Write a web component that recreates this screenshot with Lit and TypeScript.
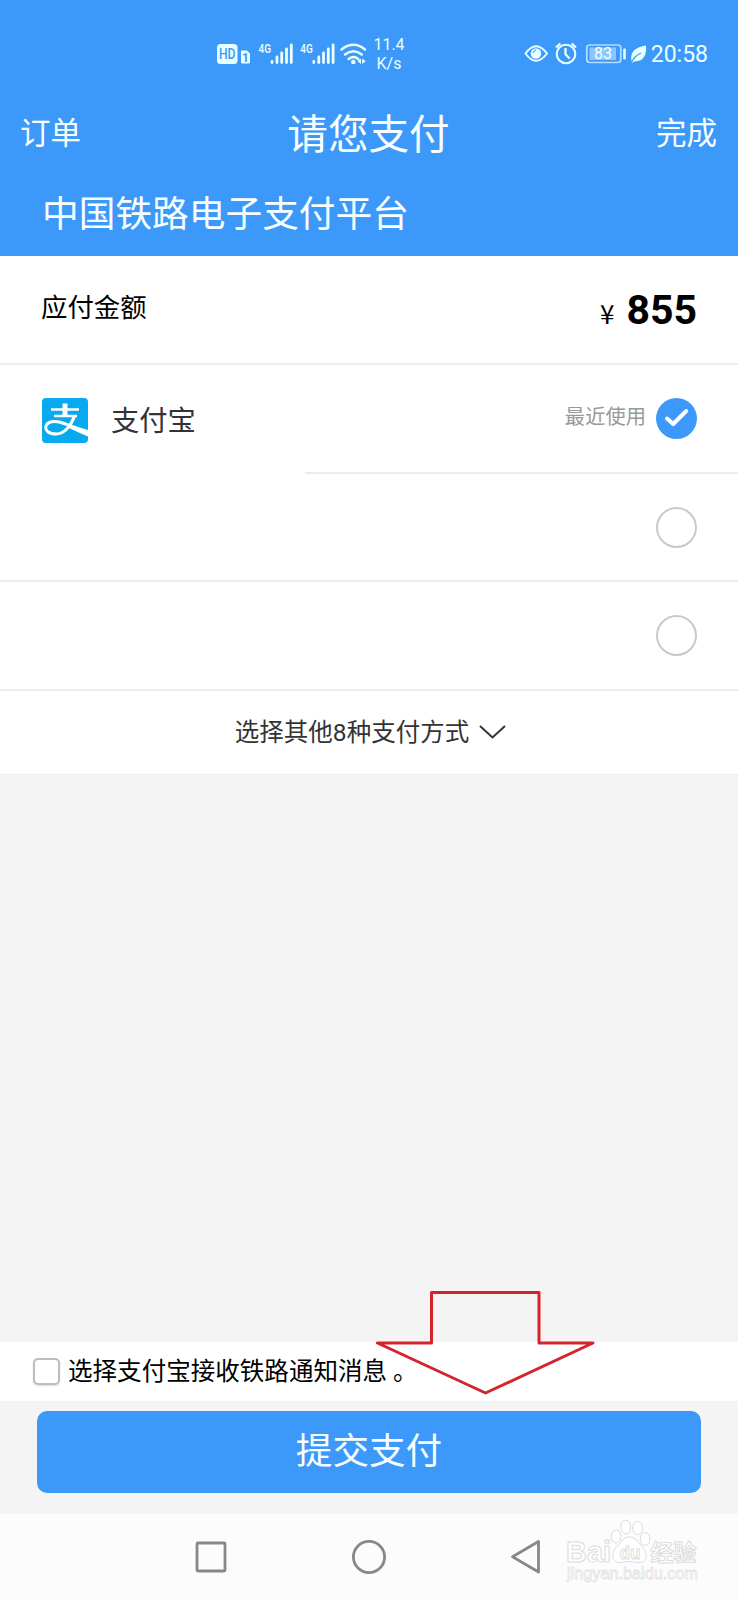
import { LitElement, html, css, svg } from 'lit';
import { customElement, property } from 'lit/decorators.js';

@customElement('status-bar')
class StatusBar extends LitElement {
  static styles = css`
    :host { display: flex; height: 107px; align-items: flex-start; justify-content: space-between; color: #eaffff;
      box-sizing: border-box; padding: 38px 30px 0 216px; font-family: Roboto, sans-serif; }
    .side { display: flex; align-items: flex-start; height: 34px; }
    svg { display: block; }
    .speed { width: 38px; margin-left: 2px; margin-top: -2px; text-align: center; font-size: 16px; line-height: 18.5px; }
    .time { font-size: 23px; line-height: 34px; margin-left: 3px; }
    .net { font: 500 13px Roboto, sans-serif; }
    .hd { font: 500 14.5px Roboto, sans-serif; }
    .one { font: 700 12px Roboto, sans-serif; }
    .level { font: 400 16px Roboto, sans-serif; }
  `;
  signal(x: number) {
    return svg`
      <text class="net" x=${x} y="52.500" fill="#eaffff" textLength="12.500" lengthAdjust="spacingAndGlyphs">4G</text>
      <g stroke="#eaffff" stroke-width="2.800" stroke-linecap="round">
        <path d="M${x + 13.5} 61.5v1M${x + 18.5} 57v5.5M${x + 23.2} 53v9.5M${x + 28} 49v13.500M${x + 32.800} 45v17.5"/>
      </g>`;
  }
  render() {
    return html`
      <div class="side">
        <svg width="152" height="34" viewBox="216 38 152 34">
          <rect x="217" y="44" width="20.500" height="20" rx="3.5" fill="#eaffff"/>
          <text class="hd" x="219" y="59.300" fill="#3c99fa" textLength="16.500" lengthAdjust="spacingAndGlyphs">HD</text>
          <path d="M241 50.500h6l3 3v8.500q0 1.500-1.500 1.500h-6q-1.500 0-1.500-1.500z" fill="#eaffff"/>
          <text class="one" x="242" y="61.500" fill="#3c99fa">1</text>
          ${this.signal(258.500)}
          ${this.signal(300.300)}
          <g fill="none" stroke="#eaffff" stroke-width="2.500" stroke-linecap="round">
            <path d="M341.500 49.500q12-9.500 23.500 0M345 54.500q8.500-6.500 16.800 0M348.600 59q5-4 9.600 0"/>
          </g>
          <circle cx="353.300" cy="62" r="2.300" fill="#eaffff"/>
          <path d="M361 58.500v5.500l-3.500-2.700zM362.200 58.500v5.500l3.500-2.700z" fill="#eaffff"/>
        </svg>
        <div class="speed">11.4<br>K/s</div>
      </div>
      <div class="side">
        <svg width="124" height="34" viewBox="524 38 124 34">
          <g fill="none" stroke="#eaffff" stroke-width="1.900">
            <path d="M525.500 53.500q10.500-14.500 21.500 0q-11 14.500-21.500 0z"/>
            <circle cx="566" cy="54" r="9.300" stroke-width="2.100"/>
            <path d="M565.500 48v6.300l4.200 4.200M556 47.500l4.300-4M576 47.500l-4.300-4" stroke-width="2.300"/>
          </g>
          <circle cx="536" cy="53.500" r="5.200" fill="#eaffff"/>
          <path d="M533 53q.5-2.500 3-3" stroke="#3c99fa" fill="none"/>
          <rect x="586.800" y="45" width="34" height="17.500" rx="3" fill="none" stroke="#b5deff" stroke-width="1.700"/>
          <rect x="589.500" y="47.500" width="26.500" height="12.500" fill="#8bc6ff"/>
          <text class="level" x="594" y="59.300" fill="#f3ffff">83</text>
          <rect x="623.200" y="48.500" width="2.600" height="11" rx="1" fill="#eaffff"/>
          <path d="M646 45.500c1 10-3 16-11 15.800l-3 1.700c-3-11 3-15.800 14-17.500z" fill="#eaffff"/>
          <path d="M631.500 62.500q2.500-6 9.500-9.500" stroke="#3c99fa" stroke-width="1.300" fill="none"/>
        </svg>
        <div class="time">20:58</div>
      </div>`;
  }
}

@customElement('pay-option')
class PayOption extends LitElement {
  @property({ type: Boolean }) selected = false;
  @property({ type: Boolean }) inset = false;
  static styles = css`
    :host { display: flex; flex-direction: column; height: 108.700px; }
    .row { flex: 1; display: flex; align-items: center; justify-content: space-between; padding: 0 41px 0 42px; }
    .line { height: 2px; background: #ececec; }
    .short { margin-left: 305px; }
    .left, .right { display: flex; align-items: center; }
    svg { display: block; }
  `;
  render() {
    return html`
      <div class="row">
        <div class="left"><slot></slot></div>
        <div class="right"><slot name="note"></slot>
          <svg width="41" height="41" viewBox="0 0 41 41">
            ${this.selected
              ? svg`<circle cx="20.500" cy="20.500" r="20.500" fill="#3c99fa"/><path d="M11 20.500l6.200 5.500 13-13" fill="none" stroke="#fff" stroke-width="4" stroke-linecap="round" stroke-linejoin="round"/>`
              : svg`<circle cx="20.500" cy="20.500" r="19.500" fill="#fff" stroke="#c9c9c9" stroke-width="2"/>`}
          </svg>
        </div>
      </div>
      <div class="line ${this.inset ? 'short' : ''}"></div>`;
  }
}

@customElement('app-root')
class AppRoot extends LitElement {
  static styles = css`
    :host { display: flex; flex-direction: column; position: relative; width: 738px; height: 1600px; overflow: hidden;
      background: #f4f4f4; font-family: Roboto, "Noto Sans CJK SC", sans-serif; color: #000; }
    .head { height: 256px; background: #3c99fa; color: #f8ffff; }
    .bar { display: grid; grid-template-columns: 1fr auto 1fr; align-items: center; height: 54px; padding: 0 21px 0 20px; font-size: 30.500px; line-height: 1; }
    .bar .title { font-size: 40.600px; margin-top: 2px; }
    .bar .done { text-align: right; }
    .platform { font-size: 36.700px; line-height: 54px; padding: 27px 0 0 42px; }
    .card { background: #fff; height: 517.500px; }
    .amount { display: flex; justify-content: space-between; height: 107px; border-bottom: 2px solid #ececec; padding: 0 41px; }
    .label { font-size: 26.400px; line-height: 104px; }
    .sum { display: flex; align-items: baseline; line-height: 108px; }
    .yen { font: 400 26px "Noto Sans CJK SC", sans-serif; margin-right: 12px; }
    .num { font-size: 41px; font-weight: 700; }
    .logo { display: block; margin-top: 4px; }
    .name { font-size: 28.300px; color: #333; margin-left: 23px; line-height: 1; margin-top: 8px; }
    .note { font-size: 20.300px; color: #999; margin-right: 10px; margin-top: -3px; line-height: 1; }
    .more { display: flex; align-items: center; justify-content: center; height: 82px; font-size: 24.500px; color: #333; gap: 10px; padding-left: 3px; }
    .more span { margin-top: -4px; }
    .space { flex: 1; border-top: 1px solid #ececec; }
    .agree { display: flex; align-items: center; height: 59.500px; background: #fff; padding-left: 33px; font-size: 24.550px; line-height: 1; }
    .box { box-sizing: border-box; width: 26.500px; height: 27px; border: 2px solid #bdbdbd; border-radius: 5px; margin-right: 8.500px; background: #fff; box-shadow: 0 1px 2px #ddd; }
    .agree .text { margin-top: 2px; }
    .stop { margin-left: 6px; }
    .submit { display: flex; align-items: center; justify-content: center; margin: 10px 37px 21px; height: 82px; border-radius: 10px;
      background: #3c99fa; color: #f8ffff; font-size: 36.600px; line-height: 1; }
    .nav { height: 86px; background: #fcfcfc; }
    .nav svg { display: block; }
    .arrow { position: absolute; left: 370px; top: 1285px; }
    .mark { position: absolute; left: 560px; top: 1514px; }
    .brand { font: 700 29px "Liberation Sans", sans-serif; }
    .du { font: 700 19px "Liberation Sans", sans-serif; }
    .cn { font: 700 23px "Noto Sans CJK SC", sans-serif; }
    .url { font: 400 16px "Liberation Sans", sans-serif; }
  `;
  render() {
    return html`
      <div class="head">
        <status-bar></status-bar>
        <div class="bar"><span>订单</span><span class="title">请您支付</span><span class="done">完成</span></div>
        <div class="platform">中国铁路电子支付平台</div>
      </div>
      <div class="card">
        <div class="amount">
          <div class="label">应付金额</div>
          <div class="sum"><span class="yen">¥</span><span class="num">855</span></div>
        </div>
        <pay-option selected inset>
          <svg class="logo" width="46" height="45" viewBox="0 0 46 45">
            <rect width="46" height="45" rx="4" fill="#08a9ee"/>
            <path d="M9 11.500h28M12 18h23" stroke="#fff" stroke-width="2.500" fill="none"/>
            <path d="M23 5.500v12.500" stroke="#fff" stroke-width="5" fill="none"/>
            <path d="M32.500 18c-3.500 10-10.500 18-18 18c-7.500 0-12-3.500-10.500-8c1.500-4.500 8-5.500 15-3.500c9 2.500 16 7 27.500 10" stroke="#fff" stroke-width="3" fill="none"/>
            <path d="M25 25.500l21 6.500v6.500q-11-4.500-21-9.500z" fill="#fff"/>
          </svg>
          <span class="name">支付宝</span>
          <span class="note" slot="note">最近使用</span>
        </pay-option>
        <pay-option></pay-option>
        <pay-option></pay-option>
        <div class="more"><span>选择其他8种支付方式</span>
          <svg width="27" height="16" viewBox="0 0 27 16"><path d="M1 2l12.500 11.500L26 2" fill="none" stroke="#333" stroke-width="2"/></svg>
        </div>
      </div>
      <div class="space"></div>
      <div class="agree"><span class="box"></span><span class="text">选择支付宝接收铁路通知消息<span class="stop">。</span></span></div>
      <div class="submit"><span>提交支付</span></div>
      <div class="nav">
        <svg width="738" height="86" viewBox="0 1514 738 86" fill="none" stroke="#888" stroke-width="2.800" stroke-linejoin="round">
          <rect x="197" y="1543" width="28" height="28" rx="1"/>
          <circle cx="369" cy="1557" r="15.600"/>
          <path d="M538.500 1541.500v30.500l-26-15.200z"/>
        </svg>
      </div>
      <svg class="arrow" width="230" height="115" viewBox="370 1285 230 115">
        <path d="M431.500 1292.500H539V1343H593L485.500 1393L377.500 1343H431.500Z" fill="none" stroke="#d3242d" stroke-width="3" stroke-linejoin="round"/>
      </svg>
      <svg class="mark" width="178" height="86" viewBox="560 1514 178 86" fill="#fff" stroke="#dcdcdc" stroke-width="1">
        <text class="brand" x="566" y="1561.500" textLength="45" lengthAdjust="spacingAndGlyphs">Bai</text>
        <ellipse cx="616" cy="1536.500" rx="4.800" ry="6.500"/>
        <ellipse cx="625.700" cy="1527" rx="5" ry="6.800"/>
        <ellipse cx="637.700" cy="1528" rx="5" ry="6.500"/>
        <ellipse cx="645" cy="1539" rx="4.800" ry="6.500"/>
        <path d="M629.500 1537c6 0 8 5 12 9c6 6 7 16-2 16.500c-4 0-6-1-10-1s-6 1-10 1c-9-.5-8-10.500-2-16.500c4-4 6-9 12-9z"/>
        <text class="du" x="619.500" y="1559" textLength="21" lengthAdjust="spacingAndGlyphs">du</text>
        <text class="cn" x="650.500" y="1560.500" textLength="46" lengthAdjust="spacingAndGlyphs">经验</text>
        <text class="url" x="567" y="1579" stroke="#e4e4e4" stroke-width=".8" textLength="131" lengthAdjust="spacingAndGlyphs">jingyan.baidu.com</text>
      </svg>`;
  }
}
